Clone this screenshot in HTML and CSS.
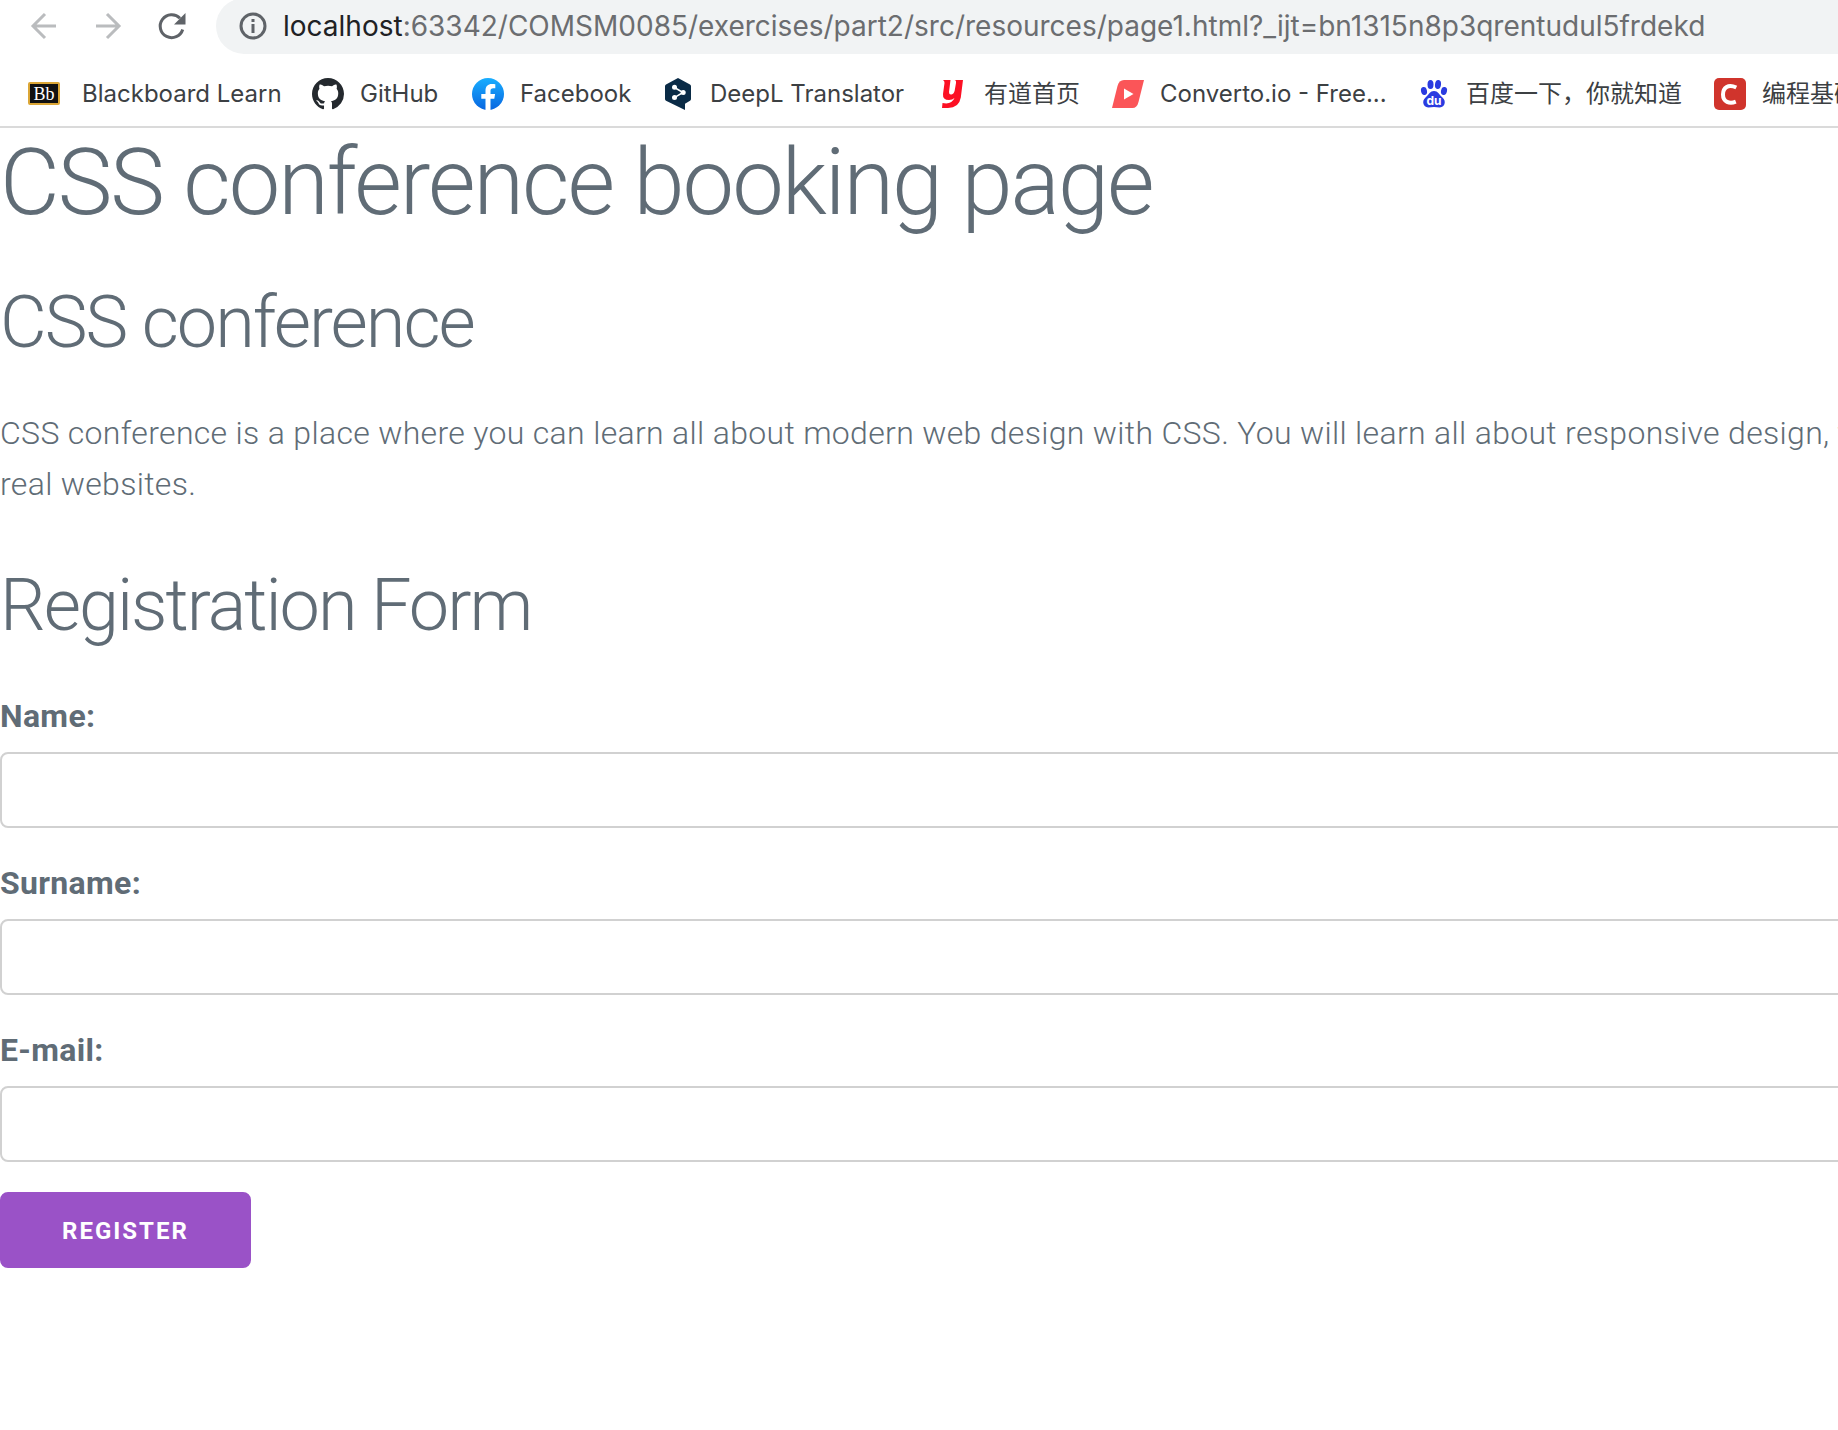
FILE: index.html
```html
<!DOCTYPE html>
<html lang="en">
<head>
<meta charset="utf-8">
<title>CSS conference booking page</title>
<link rel="stylesheet" href="styles.css">
</head>
<body>
<header class="browser">
  <div class="toolbar">
    <nav class="controls" aria-label="History">
      <button class="control control-muted" type="button" aria-label="Back">
        <svg width="32" height="32" viewBox="0 0 32 32" fill="none" stroke="currentColor" stroke-width="3"><path d="M28 16H5M17 4 5 16l12 12"/></svg>
      </button>
      <button class="control control-muted" type="button" aria-label="Forward">
        <svg width="32" height="32" viewBox="0 0 32 32" fill="none" stroke="currentColor" stroke-width="3"><path d="M4 16h23M15 4l12 12-12 12"/></svg>
      </button>
      <button class="control" type="button" aria-label="Reload">
        <svg width="32" height="32" viewBox="0 0 32 32"><path d="M26.700 19.500A11.500 11.500 0 1 1 24 8.200" fill="none" stroke="currentColor" stroke-width="3"/><path d="M29.500 3v11.500H18z" fill="currentColor"/></svg>
      </button>
    </nav>
    <div class="address">
      <svg class="info" width="28" height="28" viewBox="0 0 28 28"><circle cx="14" cy="14" r="12" fill="none" stroke="currentColor" stroke-width="3"/><path d="M12.500 12h3v9h-3zM12.500 7h3v3h-3z" fill="currentColor"/></svg>
      <div class="url" role="textbox" aria-label="Address"><span class="host">localhost</span>:63342/COMSM0085/exercises/part2/src/resources/page1.html?_ijt=bn1315n8p3qrentudul5frdekd</div>
    </div>
  </div>
  <nav class="bookmarks" aria-label="Bookmarks">
    <a class="bookmark bookmark-wide" href="#"><svg width="32" height="32" viewBox="0 0 32 32"><rect x="1" y="5" width="30" height="21" rx="1" fill="#111" stroke="#dba636" stroke-width="2"/><text x="16" y="22" text-anchor="middle" class="bb">Bb</text></svg>Blackboard Learn</a>
    <a class="bookmark" href="#"><svg width="32" height="32" viewBox="0 0 16 16" fill="#24292e"><path d="M8 0C3.580 0 0 3.580 0 8c0 3.540 2.290 6.530 5.470 7.590.4.070.55-.17.55-.38 0-.19-.01-.82-.01-1.490-2.010.37-2.530-.49-2.690-.94-.09-.23-.48-.94-.82-1.130-.28-.15-.68-.52-.01-.53.63-.01 1.080.58 1.230.82.72 1.210 1.870.87 2.330.66.07-.52.28-.87.51-1.070-1.780-.2-3.640-.89-3.640-3.950 0-.87.31-1.590.82-2.150-.08-.2-.36-1.020.08-2.120 0 0 .67-.21 2.200.82.64-.18 1.320-.27 2-.27s1.360.09 2 .27c1.530-1.040 2.200-.82 2.200-.82.44 1.100.16 1.920.08 2.120.51.56.82 1.270.82 2.150 0 3.070-1.870 3.750-3.650 3.950.29.25.54.73.54 1.480 0 1.070-.01 1.930-.01 2.200 0 .21.15.46.55.38A8.010 8.010 0 0 0 16 8c0-4.420-3.580-8-8-8z"/></svg>GitHub</a>
    <a class="bookmark" href="#"><svg width="32" height="32" viewBox="0 0 32 32"><defs><linearGradient id="fb" x1="0" y1="0" x2="0" y2="1"><stop offset="0" stop-color="#19aeff"/><stop offset="1" stop-color="#0866e0"/></linearGradient></defs><circle cx="16" cy="16" r="16" fill="url(#fb)"/><path d="M13.500 32V20.700H9.300V16h4.200v-3.600c0-4.200 2.500-6.500 6.300-6.500 1.300 0 2.400.1 3.500.3v4h-2c-2.100 0-2.800 1.200-2.800 2.600V16h4.600l-.8 4.700h-3.800V32z" fill="#fff"/></svg>Facebook</a>
    <a class="bookmark" href="#"><svg width="32" height="32" viewBox="0 0 32 32"><path d="M16 0 28 6.500q1 .5 1 1.700V21q0 1.200-1 1.800l-5 3V32L4 22.700q-1-.6-1-1.800V8.200Q3 7 4 6.500z" fill="#0a2b46"/><path d="M12.500 9.500 21 14.500l-9 5.300" fill="none" stroke="#fff" stroke-width="1.500"/><circle cx="12.500" cy="9.300" r="2.500" fill="#fff"/><circle cx="21.200" cy="14.500" r="2.500" fill="#fff"/><circle cx="12.500" cy="19.500" r="2.500" fill="#fff"/></svg>DeepL Translator</a>
    <a class="bookmark" href="#"><svg width="32" height="32" viewBox="0 0 32 32"><path d="M7 2h7.500l-1.500 12q0 3 2.500 2.500 2.500-.5 3.200-4L20 5q.3-3-1.500-3H27l-2.200 17.500Q23 30 12 30H6l.5-5q9 2 12-5-2 2-5.500 2-6.500 0-6-6L8.500 5Q8.600 3 7 2z" fill="#fc1024"/></svg>有道首页</a>
    <a class="bookmark" href="#"><svg width="32" height="32" viewBox="0 0 32 32"><path d="M12 2h20l-5.500 22q-1.500 6-6 6H0L5.500 8Q7 2 12 2z" fill="#fb5558"/><path d="M12 10.500v11l9.500-5.500z" fill="#fff"/></svg>Converto.io - Free...</a>
    <a class="bookmark" href="#"><svg width="32" height="32" viewBox="0 0 32 32"><g fill="#2a3be0"><ellipse cx="6" cy="13" rx="3" ry="4" transform="rotate(-12 6 13)"/><ellipse cx="12.500" cy="6.500" rx="3" ry="4.500"/><ellipse cx="20" cy="6.500" rx="3" ry="4.500" transform="rotate(8 20 6.500)"/><ellipse cx="26" cy="13" rx="3" ry="4" transform="rotate(12 26 13)"/><path d="M16 13c4 0 5 3.500 8 6 3 2.600 3.200 5 2.300 7.500C24 31 20 29 16 29s-8 2-10.300-2.500C4.800 24 5 21.600 8 19c3-2.500 4-6 8-6z"/></g><text x="16" y="27" text-anchor="middle" class="du">du</text></svg>百度一下，你就知道</a>
    <a class="bookmark" href="#"><svg width="32" height="32" viewBox="0 0 32 32"><rect width="32" height="32" rx="5" fill="#d0342c"/><path d="M22.300 9.500c-8-3.800-13.300 0-13.300 7 0 7.500 6.500 9.700 12.800 7.200" fill="none" stroke="#fff" stroke-width="4"/></svg>编程基础</a>
  </nav>
</header>
<main class="viewport">
  <div class="page">
    <h1>CSS conference booking page</h1>
    <h2>CSS conference</h2>
    <p>CSS conference is a place where you can learn all about modern web design with CSS. You will learn all about responsive design, t<br>real websites.</p>
    <h2>Registration Form</h2>
    <form>
      <label for="name">Name:</label>
      <input type="text" id="name" name="name">
      <label for="surname">Surname:</label>
      <input type="text" id="surname" name="surname">
      <label for="email">E-mail:</label>
      <input type="email" id="email" name="email">
      <button class="register" type="submit">Register</button>
    </form>
  </div>
</main>
</body>
</html>
```
FILE: styles.css
```css
* {
  box-sizing: border-box;
}

body {
  margin: 0;
  background: #fff;
  color: #606c76;
  font-family: Roboto, "Liberation Sans", sans-serif;
  font-size: 32px;
  font-weight: 300;
  line-height: 51px;
  letter-spacing: .01em;
}

/* Browser bars */
.browser {
  overflow: hidden;
  border-bottom: 2px solid #dadada;
  font-family: Inter, "Noto Sans CJK SC", sans-serif;
  font-weight: 400;
  letter-spacing: normal;
}

.toolbar {
  display: flex;
  align-items: flex-end;
  height: 54px;
}

.controls {
  display: flex;
  gap: 32px;
  padding: 0 28px 12px;
}

.control {
  display: flex;
  padding: 0;
  border: 0;
  background: none;
  color: #5f6368;
}

.control-muted {
  color: #babcbe;
}

.address {
  display: flex;
  flex: 1;
  align-items: center;
  gap: 16px;
  height: 56px;
  padding-left: 23px;
  border-radius: 28px 0 0 28px;
  background: #f1f3f4;
  color: #6b6d70;
  white-space: nowrap;
}

.info {
  flex: none;
  color: #5f6368;
}

.url {
  font-size: 28px;
}

.host {
  color: #202124;
}

.bookmarks {
  display: grid;
  grid-template-columns: 284px 160px 190px 274px 176px 306px 296px 160px;
  align-items: center;
  height: 72px;
  padding: 8px 0 0 28px;
}

.bookmark {
  display: flex;
  align-items: center;
  gap: 16px;
  color: #3c4043;
  font-size: 24px;
  line-height: 32px;
  text-decoration: none;
  white-space: nowrap;
}

.bookmark-wide {
  gap: 22px;
}

.bookmark svg {
  flex: none;
}

.bb {
  fill: #fff;
  font: 400 18px "Liberation Serif", serif;
}

.du {
  fill: #fff;
  font: 700 12px Inter, sans-serif;
}

/* Conference page, wider than the window that shows it */
.viewport {
  overflow: hidden;
}

.page {
  margin-right: -24px;
}

h1,
h2 {
  margin: 0 0 40px;
  font-weight: 300;
  letter-spacing: -2px;
}

h1 {
  font-size: 92px;
  line-height: 110px;
}

h2 {
  font-size: 72px;
  line-height: 90px;
}

p {
  margin: 0 0 51px;
  white-space: nowrap;
}

label {
  display: block;
  margin-bottom: 10px;
  font-weight: 700;
}

input {
  display: block;
  width: 100%;
  height: 76px;
  margin: 0 0 30px;
  padding: 12px 20px;
  border: 2px solid #d1d1d1;
  border-radius: 8px;
  background: transparent;
  color: inherit;
  font: inherit;
}

.register {
  height: 76px;
  padding: 2px 60px 0;
  border: 2px solid #9a52c7;
  border-radius: 8px;
  background: #9a52c7;
  color: #fff;
  font-family: inherit;
  font-size: 24px;
  font-weight: 700;
  letter-spacing: 2px;
  text-transform: uppercase;
}
```
